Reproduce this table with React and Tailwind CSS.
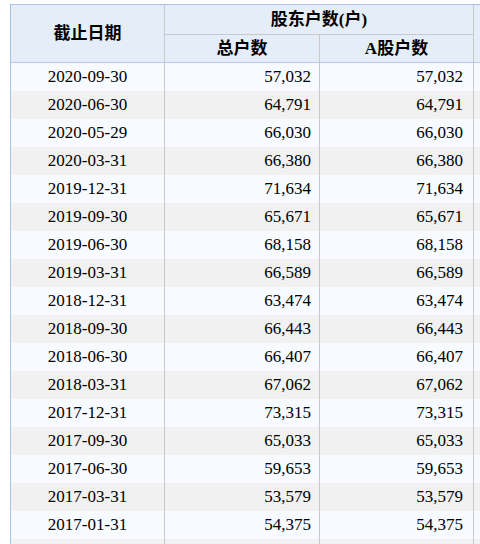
import React from 'react';

const rows = [
  ['2020-09-30', '57,032'],
  ['2020-06-30', '64,791'],
  ['2020-05-29', '66,030'],
  ['2020-03-31', '66,380'],
  ['2019-12-31', '71,634'],
  ['2019-09-30', '65,671'],
  ['2019-06-30', '68,158'],
  ['2019-03-31', '66,589'],
  ['2018-12-31', '63,474'],
  ['2018-09-30', '66,443'],
  ['2018-06-30', '66,407'],
  ['2018-03-31', '67,062'],
  ['2017-12-31', '73,315'],
  ['2017-09-30', '65,033'],
  ['2017-06-30', '59,653'],
  ['2017-03-31', '53,579'],
  ['2017-01-31', '54,375'],
  ['', ''],
];

const App = () => {
  return (
    <div className="w-[480px] h-[544px] overflow-hidden bg-white pt-[4px] pl-[10px] font-['Liberation_Serif','Noto_Sans_CJK_SC',serif] text-[17px] text-black">
      <div className="w-[520px] border-t border-l border-[#a9c3e6]">
        {/* Header */}
        <div className="flex bg-[#e5edf8] border-b border-[#b6cbe9] font-bold">
          <div className="w-[154px] h-[57px] border-r border-[#c9c9c9] flex items-center justify-center">
            截止日期
          </div>
          <div className="w-[309px] flex flex-col">
            <div className="h-[30px] border-b border-r border-[#c9c9c9] flex items-center justify-center">
              股东户数(户)
            </div>
            <div className="flex h-[27px]">
              <div className="w-[155px] border-r border-[#c9c9c9] flex items-center justify-center">总户数</div>
              <div className="w-[154px] border-r border-[#c9c9c9] flex items-center justify-center">A股户数</div>
            </div>
          </div>
          <div className="flex-1" />
        </div>

        {/* Body */}
        {rows.map(([date, count], i) => (
          <div key={i} className={`flex h-[28px] ${i % 2 === 0 ? 'bg-[#f7fafe]' : 'bg-[#f1f1f1]'}`}>
            <div className="w-[154px] border-r border-[#c9c9c9] flex items-center justify-center">{date}</div>
            <div className="w-[155px] border-r border-[#c9c9c9] flex items-center justify-end pr-[8px]">{count}</div>
            <div className="w-[154px] border-r border-[#c9c9c9] flex items-center justify-end pr-[10px]">{count}</div>
            <div className="flex-1" />
          </div>
        ))}
      </div>
    </div>
  );
};

export default App;
